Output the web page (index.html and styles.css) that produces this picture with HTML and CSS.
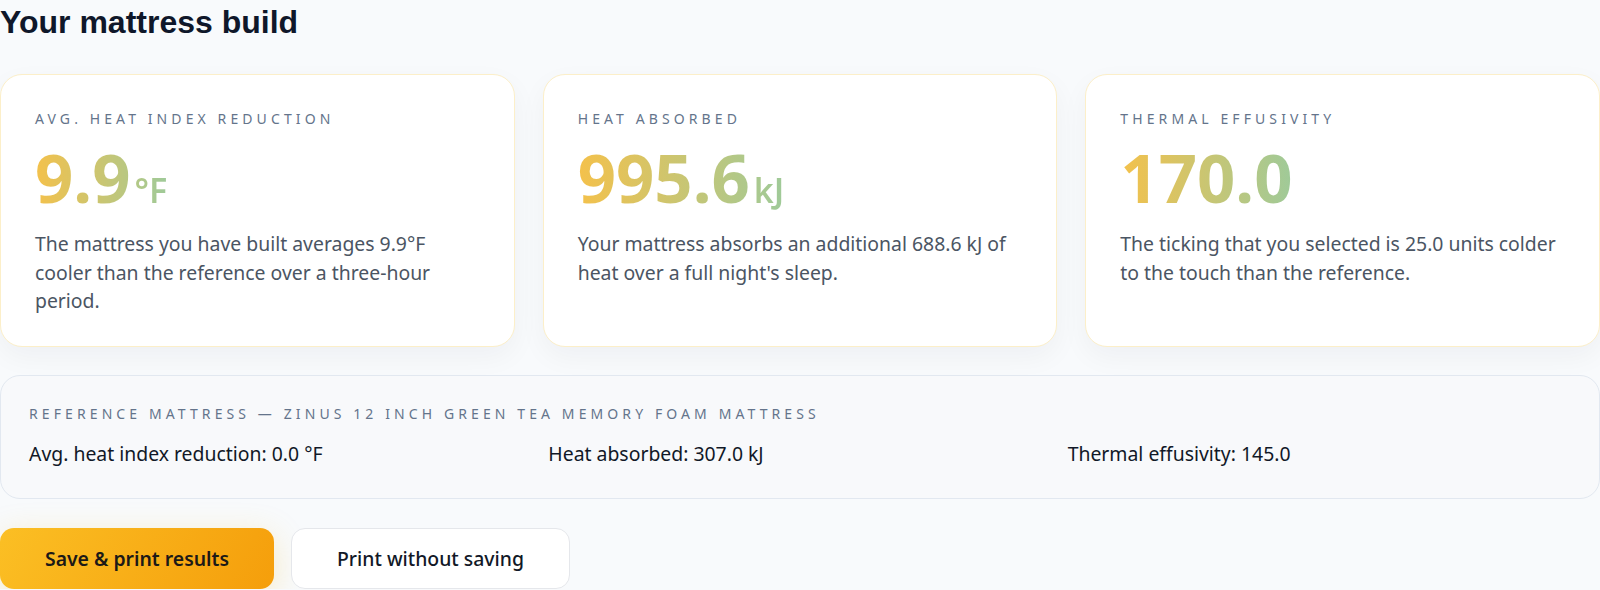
FILE: index.html
```html
<!DOCTYPE html>
<html lang="en">
<head>
  <meta charset="UTF-8">
  <title>Your mattress build</title>
  <meta name="viewport" content="width=device-width, initial-scale=1">
  <link rel="stylesheet" href="styles.css">
</head>
<body>
  <main class="results">
    <h1 class="results-title">Your mattress build</h1>

    <section class="stats">
      <article class="stat-card">
        <p class="stat-label">Avg. heat index reduction</p>
        <div class="stat-value"><span class="value-text">9.9<span class="unit">°F</span></span></div>
        <p class="stat-desc">The mattress you have built averages 9.9°F cooler than the reference over a three-hour period.</p>
      </article>
      <article class="stat-card">
        <p class="stat-label">Heat absorbed</p>
        <div class="stat-value"><span class="value-text">995.6<span class="unit">kJ</span></span></div>
        <p class="stat-desc">Your mattress absorbs an additional 688.6 kJ of heat over a full night's sleep.</p>
      </article>
      <article class="stat-card">
        <p class="stat-label">Thermal effusivity</p>
        <div class="stat-value"><span class="value-text">170.0</span></div>
        <p class="stat-desc">The ticking that you selected is 25.0 units colder to the touch than the reference.</p>
      </article>
    </section>

    <!-- baseline numbers for the reference mattress -->
    <section class="reference">
      <p class="reference-label">Reference mattress — Zinus 12 inch Green Tea Memory Foam Mattress</p>
      <div class="reference-values">
        <span>Avg. heat index reduction: 0.0 °F</span>
        <span>Heat absorbed: 307.0 kJ</span>
        <span>Thermal effusivity: 145.0</span>
      </div>
    </section>

    <div class="actions">
      <button class="btn btn-primary" type="button">Save &amp; print results</button>
      <button class="btn btn-secondary" type="button">Print without saving</button>
    </div>
  </main>
</body>
</html>
```

FILE: styles.css
```css
body {
  margin: 0;
  padding: 0;
  background: #f8fafc;
  font-family: 'Noto Sans', 'Open Sans', sans-serif;
  color: #1f2937;
  overflow: hidden;
}
.results {
  padding-top: 2px;
}
.results-title {
  margin: 0 0 32px 0;
  font-family: 'Liberation Sans', Arial, sans-serif;
  font-size: 32px;
  line-height: 40px;
  font-weight: 700;
  color: #0f172a;
}

/* Result cards */
.stats {
  display: grid;
  grid-template-columns: repeat(3, 1fr);
  gap: 28px;
}
.stat-card {
  background: #fff;
  border: 1px solid #fcefc9;
  border-radius: 22px;
  padding: 34px 34px 30px 34px;
  box-shadow: 0 10px 28px rgba(15, 23, 42, 0.045);
}
.stat-label {
  margin: 0;
  font-size: 14px;
  line-height: 20px;
  letter-spacing: 4.1px;
  text-transform: uppercase;
  color: #64748b;
}
.stat-value {
  margin-top: 15px;
  font-size: 67px;
  line-height: 1;
  font-weight: 700;
}
.value-text {
  display: inline-block;
  background: linear-gradient(90deg, #f4c14b 0%, #9fca99 100%);
  -webkit-background-clip: text;
  background-clip: text;
  color: transparent;
}
.unit {
  margin-left: 4px;
  font-size: 34px;
  font-weight: 600;
}
.stat-desc {
  margin: 19px 0 0 0;
  font-size: 19.4px;
  line-height: 28.5px;
  color: #4b5563;
}

/* Reference panel */
.reference {
  margin-top: 28px;
  background: #f8f9fb;
  border: 1px solid #e2e8f0;
  border-radius: 20px;
  padding: 28px 28px 30px 28px;
}
.reference-label {
  margin: 0 0 16px 0;
  font-size: 14px;
  line-height: 20px;
  letter-spacing: 4.1px;
  text-transform: uppercase;
  color: #64748b;
}
.reference-values {
  display: grid;
  grid-template-columns: repeat(3, 1fr);
  gap: 16px;
  font-size: 19.4px;
  line-height: 28.5px;
  color: #111827;
}

/* Buttons */
.actions {
  display: flex;
  gap: 17px;
  margin-top: 29px;
}
.btn {
  height: 61px;
  padding: 0 45px;
  border-radius: 14px;
  font-family: 'Noto Sans', 'Open Sans', sans-serif;
  font-size: 19.4px;
  cursor: pointer;
}
.btn-primary {
  border: none;
  background: linear-gradient(120deg, #fbbf24 0%, #f59e0b 100%);
  color: #1c1917;
  font-weight: 600;
  box-shadow: 0 8px 32px rgba(251, 191, 36, 0.25);
}
.btn-secondary {
  border: 1px solid #e5e7eb;
  background: #fff;
  color: #111827;
  font-weight: 500;
}
```
